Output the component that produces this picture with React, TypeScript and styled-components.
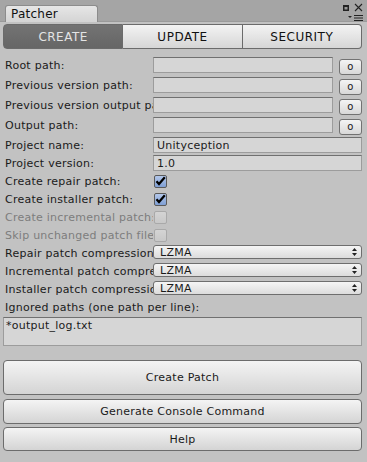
import styled, { createGlobalStyle } from "styled-components"

const GlobalStyle = createGlobalStyle`
    html, body {
        margin: 0;
        padding: 0;
        background: #c2c2c2;
    }
    * {
        box-sizing: border-box;
    }
`

const Window = styled.div`
    width: 367px;
    height: 462px;
    display: flex;
    flex-direction: column;
    background: #c2c2c2;
    font-family: "DejaVu Sans", "Bitstream Vera Sans", sans-serif;
    font-size: 11px;
    letter-spacing: 0.25px;
    color: #1a1a1a;
    overflow: hidden;
`

const TitleBar = styled.div`
    height: 22px;
    display: flex;
    align-items: flex-end;
    justify-content: space-between;
    padding: 0 4px 0 5px;
    background: #a5a5a5;
    border-bottom: 1px solid #9a9a9a;
`

const Tab = styled.div`
    width: 93px;
    height: 17px;
    padding: 1px 0 0 5px;
    background: linear-gradient(#e6e6e6, #d4d4d4);
    border: 1px solid #8c8c8c;
    border-bottom: none;
    border-radius: 3px 3px 0 0;
    font-size: 12px;
    color: #111;
    margin-bottom: -1px;
`

const WindowIcons = styled.div`
    display: flex;
    flex-direction: column;
    align-items: flex-end;
    align-self: stretch;
    padding-top: 3px;
    gap: 3px;
`

const IconRow = styled.div`
    display: flex;
    align-items: center;
    gap: 5px;
`

const Body = styled.div`
    display: flex;
    flex-direction: column;
    padding: 2px 5px 0 3px;
`

const Toolbar = styled.div`
    display: flex;
    height: 25px;
`

interface SegmentProps {
    active?: boolean
}

const Segment = styled.div<SegmentProps>`
    flex: 1;
    display: flex;
    align-items: center;
    justify-content: center;
    font-size: 12px;
    letter-spacing: 0.5px;
    border: 1px solid #6b6b6b;
    border-left-width: 0;
    color: ${p => (p.active ? "#e4e4e4" : "#111")};
    background: ${p =>
        p.active ? "linear-gradient(#737373, #666666)" : "linear-gradient(#f3f3f3, #d6d6d6)"};
    &:first-child {
        border-left-width: 1px;
        border-radius: 4px 0 0 4px;
    }
    &:last-child {
        border-radius: 0 4px 4px 0;
    }
`

const Form = styled.div`
    display: flex;
    flex-direction: column;
    margin-top: 6px;
`

interface RowProps {
    tall?: boolean
}

const Row = styled.div<RowProps>`
    display: flex;
    align-items: center;
    height: ${p => (p.tall ? 20 : 18)}px;
`

interface LabelProps {
    disabled?: boolean
}

const Label = styled.div<LabelProps>`
    width: 150px;
    flex: none;
    padding-left: 2px;
    white-space: nowrap;
    overflow: hidden;
    color: ${p => (p.disabled ? "#7d7d7d" : "#1a1a1a")};
`

const TextField = styled.div`
    flex: 1;
    height: 16px;
    padding: 0 3px;
    display: flex;
    align-items: center;
    background: #d6d6d6;
    border: 1px solid #9c9c9c;
    border-top-color: #707070;
    white-space: nowrap;
    overflow: hidden;
`

const PickButton = styled.div`
    width: 23px;
    height: 16px;
    margin: 4px 0 0 6px;
    display: flex;
    align-items: center;
    justify-content: center;
    font-size: 10px;
    padding-bottom: 2px;
    background: linear-gradient(#f4f4f4, #d8d8d8);
    border: 1px solid #727272;
    border-radius: 3px;
`

interface CheckProps {
    checked?: boolean
}

const CheckBox = styled.div<CheckProps>`
    width: 13px;
    height: 13px;
    margin-left: 1px;
    display: flex;
    align-items: center;
    justify-content: center;
    border: 1px solid ${p => (p.checked ? "#5a5a5a" : "#a9a9a9")};
    border-radius: 2px;
    background: ${p =>
        p.checked ? "linear-gradient(#b3c7ea, #7f9fd4)" : "linear-gradient(#d4d4d4, #c8c8c8)"};
`

const Dropdown = styled.div`
    flex: 1;
    height: 14px;
    margin-bottom: 2px;
    display: flex;
    align-items: center;
    justify-content: space-between;
    padding: 0 4px 0 6px;
    background: linear-gradient(#f5f5f5, #dcdcdc);
    border: 1px solid #6e6e6e;
    border-radius: 3px;
    font-size: 11px;
`

const TextArea = styled.div`
    height: 29px;
    margin-top: 1px;
    padding: 1px 2px;
    background: #d6d6d6;
    border: 1px solid #9c9c9c;
    border-top-color: #707070;
`

interface ButtonProps {
    h: number
    mt: number
}

const Button = styled.div<ButtonProps>`
    height: ${p => p.h}px;
    margin-top: ${p => p.mt}px;
    display: flex;
    align-items: center;
    justify-content: center;
    background: linear-gradient(#f4f4f4, #d4d4d4);
    border: 1px solid #6c6c6c;
    border-radius: 4px;
    font-size: 11px;
`

function Check() {
    return (
        <svg width="11" height="10" viewBox="0 0 11 10">
            <path d="M1.5 5.2 L4 8 L9.8 1.2" fill="none" stroke="#000" strokeWidth="2.2" />
        </svg>
    )
}

function Arrows() {
    return (
        <svg width="5" height="8" viewBox="0 0 5 8">
            <path d="M2.5 0 L5 3 H0 Z M2.5 8 L5 5 H0 Z" fill="#222" />
        </svg>
    )
}

const pathRows = ["Root path:", "Previous version path:", "Previous version output path:", "Output path:"]

const checkRows = [
    { label: "Create repair patch:", checked: true, disabled: false },
    { label: "Create installer patch:", checked: true, disabled: false },
    { label: "Create incremental patch:", checked: false, disabled: true },
    { label: "Skip unchanged patch files:", checked: false, disabled: true },
]

const compressionRows = ["Repair patch compression:", "Incremental patch compression:", "Installer patch compression:"]

export default function App() {
    return (
        <Window>
            <GlobalStyle />
            <TitleBar>
                <Tab>Patcher</Tab>
                <WindowIcons>
                    <IconRow>
                        <svg width="6" height="6" viewBox="0 0 6 6">
                            <rect x="0.5" y="0.5" width="5" height="5" fill="#222" stroke="#222" />
                            <rect x="1.5" y="2" width="3" height="2.5" fill="#999" />
                        </svg>
                        <svg width="9" height="9" viewBox="0 0 9 9">
                            <path d="M1 1 L8 8 M8 1 L1 8" stroke="#222" strokeWidth="1.1" />
                        </svg>
                    </IconRow>
                    <svg width="15" height="6" viewBox="0 0 15 6">
                        <path d="M0 1 H4 L2 3 Z" fill="#222" />
                        <path d="M6 0.5 H15 M6 3 H15 M6 5.5 H15" stroke="#222" strokeWidth="1" />
                    </svg>
                </WindowIcons>
            </TitleBar>
            <Body>
                <Toolbar>
                    <Segment active>CREATE</Segment>
                    <Segment>UPDATE</Segment>
                    <Segment>SECURITY</Segment>
                </Toolbar>
                <Form>
                    {pathRows.map(label => (
                        <Row tall key={label}>
                            <Label>{label}</Label>
                            <TextField />
                            <PickButton>o</PickButton>
                        </Row>
                    ))}
                    <Row style={{ marginTop: 1 }}>
                        <Label>Project name:</Label>
                        <TextField>Unityception</TextField>
                    </Row>
                    <Row>
                        <Label>Project version:</Label>
                        <TextField>1.0</TextField>
                    </Row>
                    {checkRows.map(r => (
                        <Row key={r.label}>
                            <Label disabled={r.disabled}>{r.label}</Label>
                            <CheckBox checked={r.checked}>{r.checked && <Check />}</CheckBox>
                        </Row>
                    ))}
                    {compressionRows.map(label => (
                        <Row key={label}>
                            <Label>{label}</Label>
                            <Dropdown>
                                LZMA
                                <Arrows />
                            </Dropdown>
                        </Row>
                    ))}
                    <Row>
                        <Label style={{ width: "auto" }}>Ignored paths (one path per line):</Label>
                    </Row>
                    <TextArea>*output_log.txt</TextArea>
                </Form>
                <Button h={35} mt={14}>
                    Create Patch
                </Button>
                <Button h={25} mt={4}>
                    Generate Console Command
                </Button>
                <Button h={24} mt={3}>
                    Help
                </Button>
            </Body>
        </Window>
    )
}
